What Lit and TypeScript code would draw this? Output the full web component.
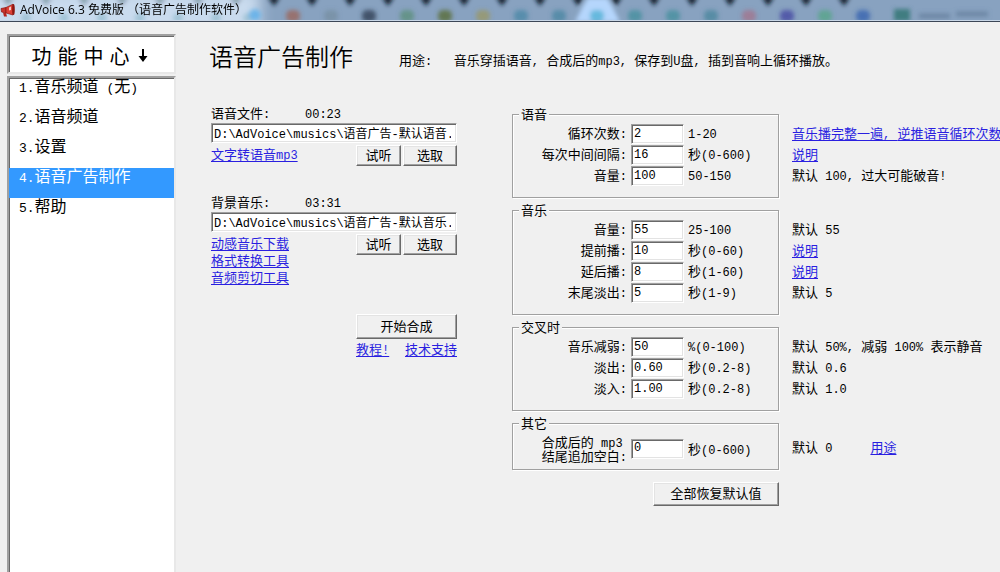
import { LitElement, html, css, svg } from "lit";
import { customElement, property, state } from "lit/decorators.js";
import { classMap } from "lit/directives/class-map.js";

/** Wraps half-width runs so that they are set in the monospaced face. */
const mix = (text: string) =>
  text
    .split(/([\x20-\x7e]+)/)
    .filter((part) => part !== "")
    .map((part) => (/^[\x20-\x7e]+$/.test(part) ? html`<span class="latin">${part}</span>` : part));

const shared = css`
  * {
    box-sizing: border-box;
  }
  .latin {
    font-family: "Liberation Mono", monospace;
    font-size: 12px;
    line-height: 0;
    white-space: pre;
  }
  a {
    color: #2a1fe0;
    text-decoration: underline;
    text-underline-offset: 2px;
    white-space: nowrap;
  }
  button {
    font: inherit;
    color: #000;
    background: #f0f0f0;
    padding: 0 0 2px;
    border: 1px solid;
    border-color: #fff #696969 #696969 #fff;
    box-shadow: inset -1px -1px 0 #a0a0a0, inset 1px 1px 0 #e3e3e3;
    border-radius: 0;
    white-space: nowrap;
  }
  input {
    font: 12px "Liberation Mono", "Noto Sans CJK SC", monospace;
    color: #000;
    background: #fff;
    height: 20px;
    padding: 0 0 1px 2px;
    border: 1px solid;
    border-color: #a0a0a0 #fff #fff #a0a0a0;
    box-shadow: inset 1px 1px 0 #696969, inset -1px -1px 0 #e3e3e3;
    border-radius: 0;
    outline: none;
    min-width: 0;
  }
`;

const TABS = ["#9a6a60", "#7890a4", "#35465c", "#5f9080", "#5c7040", "#98986c", "#4f8aa8", "#5088a4", "#58b4d8", "#4a90a0", "#4a90a0", "#5088a0", "#a07890", "#4a50a4", "#5aa48c", "#3c68b0"];

@customElement("title-bar")
export class TitleBar extends LitElement {
  static styles = [
    shared,
    css`
      :host {
        display: block;
        height: 22px;
        position: relative;
        overflow: hidden;
        background: #88a2c0;
        border-bottom: 1px solid #3c4656;
      }
      .backdrop {
        position: absolute;
        inset: 0;
        width: 1000px;
        height: 22px;
      }
      .caption {
        position: relative;
        display: flex;
        align-items: center;
        gap: 4px;
        height: 21px;
        font-family: "Open Sans", "Noto Sans CJK SC", sans-serif;
        font-size: 12px;
        border-bottom: 1px solid #c8d6e6;
        white-space: pre;
      }
      .logo {
        width: 16px;
        height: 16px;
      }
    `,
  ];

  render() {
    return html`
      <svg class="backdrop" viewBox="0 0 1000 22" aria-hidden="true">
        <defs>
          <filter id="soft" x="-30%" y="-80%" width="160%" height="260%"><feGaussianBlur stdDeviation="2" /></filter>
          <filter id="glow" x="-20%" y="-80%" width="140%" height="260%"><feGaussianBlur stdDeviation="7" /></filter>
        </defs>
        <rect x="-20" y="-10" width="280" height="46" fill="#c9dbee" filter="url(#glow)" />
        <g filter="url(#soft)">
          <path d="M575 22L583 6L588 -2H607L612 6L620 22Z" fill="#b5d6fc" />
          ${[26, 64, 102, 140, 178, 216, 248].map((x) => svg`<circle cx=${x} cy="18" r="5" fill="#8bb6c8" opacity=".6" />`)}
          ${Array.from({ length: 23 }, (_, i) => 8 + i * 38).map(
            (x) => svg`<path d=${`M${x - 6} -3H${x + 6}L${x} 6Z`} fill="#101a28" opacity=${x < 260 ? 0.3 : 1} />`,
          )}
          ${TABS.map((c, i) => svg`<rect x=${286 + i * 38} y="10" width="14" height="12" rx="5" fill=${c} opacity=".85" />`)}
          <circle cx="255" cy="15" r="6" fill="#6db4e8" />
          <rect x="894" y="9" width="16" height="12" fill="#3f7d80" />
          <path d="M919 16H950M956 14H988" stroke="#6c86a4" stroke-width="5" />
        </g>
      </svg>
      <div class="caption">
        <svg class="logo" viewBox="0 0 16 16" aria-hidden="true">
          <path d="M1 6.500L6 5.500V11L1.500 10Z" fill="#c9322c" stroke="#8c1712" stroke-width=".7" />
          <path d="M6 5.500L13 2.200V13L6 11Z" fill="#dc4037" stroke="#8c1712" stroke-width=".7" />
          <path d="M3 10.500L4 14.500H7L6 11" fill="#b3241e" />
          <path d="M9 5.500L11 4.500V8L9 8.500Z" fill="#f6c9c2" />
          <ellipse cx="13.500" cy="7.500" rx="1.300" ry="5.500" fill="#8c1712" />
        </svg>
        <span>AdVoice 6.3 免费版 （语音广告制作软件）</span>
      </div>
    `;
  }
}

@customElement("side-nav")
export class SideNav extends LitElement {
  @state() private selected = 3;
  private items = ["1.音乐频道 (无)", "2.语音频道", "3.设置", "4.语音广告制作", "5.帮助"];

  static styles = [
    shared,
    css`
      :host {
        display: flex;
        flex-direction: column;
        gap: 2px;
      }
      .head,
      .list {
        background: #fff;
        border: 2px solid;
        border-color: #a0a0a0 #e8e8e8 #e8e8e8 #a0a0a0;
        box-shadow: inset 1px 1px 0 #696969;
      }
      .head {
        display: flex;
        align-items: center;
        justify-content: center;
        gap: 8px;
        height: 40px;
        margin: 0;
        padding: 4px 4px 0 0;
        font-size: 20px;
        font-weight: 400;
        line-height: 24px;
      }
      .head .latin {
        font-size: 10px;
      }
      .arrow {
        width: 10px;
        height: 16px;
      }
      .list {
        flex: 1;
        margin: 0;
        padding: 0;
        list-style: none;
        border-bottom: 0;
      }
      .item {
        display: block;
        height: 30px;
        padding-left: 10px;
        font-size: 16px;
        line-height: 14px;
        color: #000;
        text-decoration: none;
      }
      .item .latin {
        font-size: 13px;
      }
      .active {
        background: #3399ff;
        color: #fff;
      }
    `,
  ];

  render() {
    return html`
      <h2 class="head">
        <span>${mix("功 能 中 心")}</span>
        <svg class="arrow" viewBox="0 0 10 16" aria-hidden="true"><path d="M4 1H6V8H9.500L5 14L.5 8H4Z" fill="#000" /></svg>
      </h2>
      <ul class="list">
        ${this.items.map(
          (text, i) => html`<li>
            <a class=${classMap({ item: true, active: i === this.selected })} href="#" @click=${() => (this.selected = i)}>${mix(text)}</a>
          </li>`,
        )}
      </ul>
    `;
  }
}

@customElement("file-picker")
export class FilePicker extends LitElement {
  @property() label = "";
  @property() time = "";
  @property() path = "";
  @property({ type: Array }) links: string[] = [];

  static styles = [
    shared,
    css`
      :host {
        display: block;
      }
      .top {
        display: grid;
        grid-template-columns: 94px 1fr;
        line-height: 20px;
      }
      .path {
        display: block;
        width: 100%;
        padding-right: 5px;
      }
      .below {
        display: flex;
        justify-content: space-between;
        align-items: flex-start;
        padding-top: 2px;
      }
      .links {
        display: flex;
        flex-direction: column;
        line-height: 17px;
      }
      .buttons {
        display: flex;
        gap: 2px;
      }
      .buttons button {
        height: 21px;
        line-height: 17px;
      }
      .play {
        width: 45px;
      }
      .pick {
        width: 54px;
      }
    `,
  ];

  render() {
    return html`
      <div class="top"><label for="path">${mix(this.label)}</label><span>${mix(this.time)}</span></div>
      <input class="path" id="path" type="text" .value=${this.path} />
      <div class="below">
        <div class="links">${this.links.map((l) => html`<a href="#">${mix(l)}</a>`)}</div>
        <div class="buttons"><button class="play">试听</button><button class="pick">选取</button></div>
      </div>
    `;
  }
}

interface Row {
  label: string[];
  value: string;
  unit: string;
  hint?: string;
  link?: string;
}

@customElement("option-group")
export class OptionGroup extends LitElement {
  @property() name = "";
  @property({ type: Array }) rows: Row[] = [];

  static styles = [
    shared,
    css`
      :host {
        display: grid;
        grid-template-columns: 267px 1fr;
        column-gap: 13px;
        white-space: nowrap;
      }
      .box {
        margin: 0;
        min-width: 0;
        padding: 2px 0 10px;
        border: 1px solid #a0a0a0;
        box-shadow: 1px 1px 0 #fff, inset 1px 1px 0 #fff;
      }
      .name {
        margin-left: 6px;
        padding: 0 2px;
        line-height: 16px;
        background: #f0f0f0;
      }
      .row {
        display: grid;
        grid-template-columns: 114px 53px 1fr;
        column-gap: 4px;
        height: 21px;
        align-items: start;
        line-height: 18px;
      }
      .label {
        justify-self: end;
      }
      .hints {
        padding-top: 16px;
      }
      .hint {
        display: flex;
        gap: 38px;
        height: 21px;
        line-height: 21px;
      }
      .double {
        height: 31px;
        line-height: 31px;
      }
      .row.double {
        align-items: center;
        line-height: 18px;
      }
      .double .label {
        line-height: 14px;
      }
      .tight {
        padding-bottom: 5px;
      }
    `,
  ];

  render() {
    const tall = (r: Row) => r.label.length > 1;
    return html`
      <fieldset class=${classMap({ box: true, tight: this.rows.some(tall) })}>
        <legend class="name">${this.name}</legend>
        ${this.rows.map(
          (r, i) => html`<div class=${classMap({ row: true, double: tall(r) })}>
            <label class="label" for=${`f${i}`}>${r.label.map((l, n) => html`${n ? html`<br />` : ""}${mix(l)}`)}</label>
            <input id=${`f${i}`} type="text" .value=${r.value} />
            <span>${mix(r.unit)}</span>
          </div>`,
        )}
      </fieldset>
      <div class="hints">
        ${this.rows.map(
          (r) => html`<div class=${classMap({ hint: true, double: tall(r) })}>
            ${r.hint ? html`<span>${mix(r.hint)}</span>` : ""}${r.link ? html`<a href="#">${mix(r.link)}</a>` : ""}
          </div>`,
        )}
      </div>
    `;
  }
}

@customElement("app-root")
export class AppRoot extends LitElement {
  private groups: { name: string; rows: Row[] }[] = [
    {
      name: "语音",
      rows: [
        { label: ["循环次数:"], value: "2", unit: "1-20", link: "音乐播完整一遍, 逆推语音循环次数" },
        { label: ["每次中间间隔:"], value: "16", unit: "秒(0-600)", link: "说明" },
        { label: ["音量:"], value: "100", unit: "50-150", hint: "默认 100, 过大可能破音!" },
      ],
    },
    {
      name: "音乐",
      rows: [
        { label: ["音量:"], value: "55", unit: "25-100", hint: "默认 55" },
        { label: ["提前播:"], value: "10", unit: "秒(0-60)", link: "说明" },
        { label: ["延后播:"], value: "8", unit: "秒(1-60)", link: "说明" },
        { label: ["末尾淡出:"], value: "5", unit: "秒(1-9)", hint: "默认 5" },
      ],
    },
    {
      name: "交叉时",
      rows: [
        { label: ["音乐减弱:"], value: "50", unit: "%(0-100)", hint: "默认 50%, 减弱 100% 表示静音" },
        { label: ["淡出:"], value: "0.60", unit: "秒(0.2-8)", hint: "默认 0.6" },
        { label: ["淡入:"], value: "1.00", unit: "秒(0.2-8)", hint: "默认 1.0" },
      ],
    },
    {
      name: "其它",
      rows: [{ label: ["合成后的 mp3", "结尾追加空白:"], value: "0", unit: "秒(0-600)", hint: "默认 0", link: "用途" }],
    },
  ];

  static styles = [
    shared,
    css`
      :host {
        display: flex;
        flex-direction: column;
        min-height: 100vh;
        overflow: hidden;
        background: #f0f0f0;
        color: #000;
        font-family: "Noto Sans CJK SC", sans-serif;
        font-size: 13px;
        line-height: 16px;
      }
      .body {
        flex: 1;
        display: grid;
        grid-template-columns: 169px minmax(0, 1fr);
        column-gap: 33px;
        padding: 12px 0 0 7px;
      }
      .header {
        display: flex;
        align-items: center;
        gap: 46px;
        height: 44px;
        white-space: nowrap;
      }
      .title {
        margin: 0;
        font-size: 24px;
        font-weight: 350;
        line-height: 32px;
      }
      .purpose {
        margin: 0;
        padding-top: 8px;
      }
      .columns {
        display: grid;
        grid-template-columns: 246px minmax(0, 1fr);
        column-gap: 55px;
        padding: 25px 0 0 2px;
      }
      .files {
        display: flex;
        flex-direction: column;
      }
      .voice {
        height: 89px;
      }
      .voice,
      .music {
        flex: none;
      }
      .make {
        align-self: flex-end;
        width: 101px;
        padding-top: 29px;
      }
      .start {
        display: block;
        width: 100%;
        height: 25px;
      }
      .help {
        display: flex;
        justify-content: space-between;
        padding-top: 2px;
      }
      .groups {
        display: flex;
        flex-direction: column;
        gap: 4px;
        padding-top: 3px;
      }
      .reset {
        width: 126px;
        height: 24px;
        margin: 8px 0 0 141px;
      }
    `,
  ];

  render() {
    return html`
      <title-bar></title-bar>
      <div class="body">
        <side-nav></side-nav>
        <main>
          <header class="header">
            <h1 class="title">语音广告制作</h1>
            <p class="purpose">${mix("用途:   音乐穿插语音, 合成后的mp3, 保存到U盘, 插到音响上循环播放。")}</p>
          </header>
          <div class="columns">
            <section class="files">
              <file-picker class="voice" label="语音文件:" time="00:23" path="D:\\AdVoice\\musics\\语音广告-默认语音.mp3" .links=${["文字转语音mp3"]}></file-picker>
              <file-picker class="music" label="背景音乐:" time="03:31" path="D:\\AdVoice\\musics\\语音广告-默认音乐.mp3" .links=${["动感音乐下载", "格式转换工具", "音频剪切工具"]}></file-picker>
              <div class="make">
                <button class="start">开始合成</button>
                <div class="help"><a href="#">${mix("教程!")}</a><a href="#">技术支持</a></div>
              </div>
            </section>
            <section class="groups">
              ${this.groups.map((g) => html`<option-group .name=${g.name} .rows=${g.rows}></option-group>`)}
              <button class="reset">全部恢复默认值</button>
            </section>
          </div>
        </main>
      </div>
    `;
  }
}
